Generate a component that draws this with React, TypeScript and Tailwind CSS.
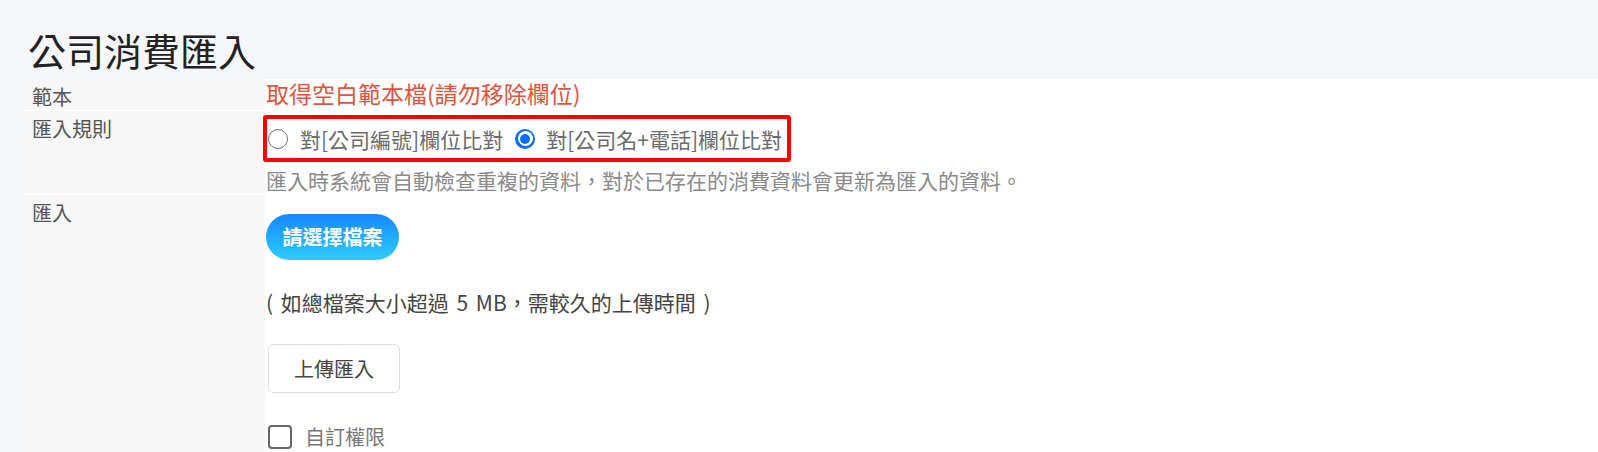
import React from "react";

function Row({
  label,
  children,
  last,
}: {
  label: string;
  children: React.ReactNode;
  last?: boolean;
}) {
  return (
    <div className={"flex " + (last ? "" : "border-b border-white")}>
      <div className="w-[241px] shrink-0 bg-[#f7f7f7] pl-[8px] pt-[5px] text-[20px] leading-[26px] text-[#555]">
        {label}
      </div>
      <div className="flex-1 bg-white pl-[1px]">{children}</div>
    </div>
  );
}

function Radio({ checked }: { checked?: boolean }) {
  if (checked) {
    return (
      <span className="flex h-[20px] w-[20px] shrink-0 items-center justify-center rounded-full bg-[#0b6cff]">
        <span className="flex h-[15px] w-[15px] items-center justify-center rounded-full bg-white">
          <span className="h-[10px] w-[10px] rounded-full bg-[#0b6cff]" />
        </span>
      </span>
    );
  }
  return (
    <span className="h-[20px] w-[20px] shrink-0 rounded-full border-[1.5px] border-[#6f6f6f] bg-white" />
  );
}

export default function App() {
  return (
    <div className="min-h-screen bg-[#f5f6fa] font-['Noto_Sans_CJK_TC',sans-serif]">
      <div className="pl-[28px] pt-[27px] pb-[6px] text-[38px] font-normal leading-[46px] text-[#222]">
        公司消費匯入
      </div>
      <div className="ml-[24px] flex flex-col">
        <Row label="範本">
          <div className="h-[31px] text-[23px] leading-[28px] text-[#e2533b]">
            取得空白範本檔(請勿移除欄位)
          </div>
        </Row>
        <Row label="匯入規則">
          <div className="flex flex-col">
            <div className="mt-[4px] -ml-[3px] flex h-[47px] w-fit items-center rounded-[3px] border-4 border-[#ff0000] pl-[1px] pr-[5px] text-[21px] leading-[28px] text-[#6b6b6b]">
              <Radio />
              <span className="ml-[12px]">對[公司編號]欄位比對</span>
              <span className="ml-[12px]">
                <Radio checked />
              </span>
              <span className="ml-[11px]">對[公司名+電話]欄位比對</span>
            </div>
            <div className="mt-[4px] text-[21px] leading-[28px] text-[#8a8a8a]">
              匯入時系統會自動檢查重複的資料，對於已存在的消費資料會更新為匯入的資料。
            </div>
          </div>
        </Row>
        <Row label="匯入" last>
          <div className="flex flex-col items-start pt-[19px] pb-[60px]">
            <button className="flex h-[46px] w-[133px] items-center justify-center rounded-full bg-linear-to-b from-[#1a86ff] to-[#30ccff] text-[20px] font-bold text-white">
              請選擇檔案
            </button>
            <div className="mt-[28px] text-[21px] leading-[28px] text-[#444] [word-spacing:3px]">
              ( 如總檔案大小超過 5 MB，需較久的上傳時間 )
            </div>
            <button className="mt-[28px] ml-[2px] flex h-[49px] w-[132px] items-center justify-center rounded-[6px] border border-[#dddddd] bg-white text-[20px] text-[#444]">
              上傳匯入
            </button>
            <label className="mt-[31px] ml-[2px] flex items-center">
              <span className="h-[24px] w-[24px] rounded-[4px] border-2 border-[#666] bg-white" />
              <span className="ml-[13px] text-[20px] leading-[26px] text-[#777]">
                自訂權限
              </span>
            </label>
          </div>
        </Row>
      </div>
    </div>
  );
}
